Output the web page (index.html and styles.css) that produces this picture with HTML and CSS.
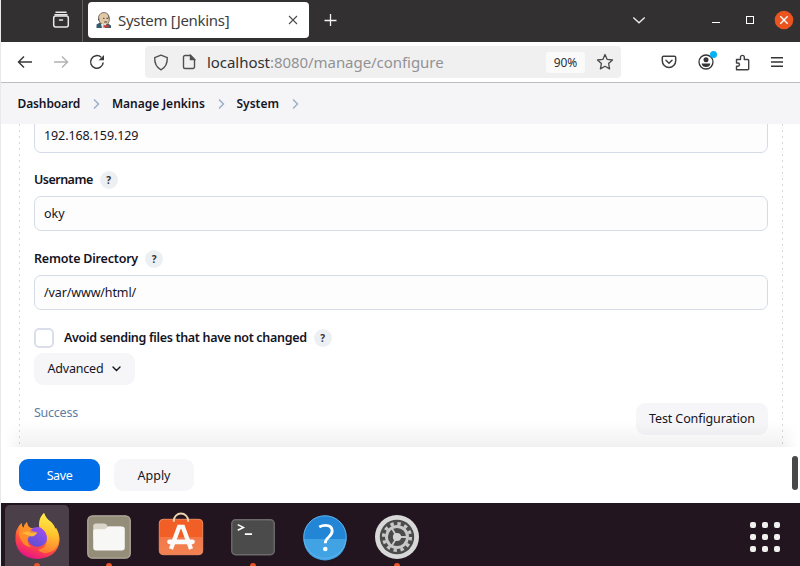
FILE: index.html
```html
<!DOCTYPE html>
<html lang="en">
<head>
<meta charset="utf-8">
<title>System [Jenkins]</title>
<link rel="stylesheet" href="styles.css">
</head>
<body>
<div class="screen">
  <header class="titlebar">
    <svg class="i-view" width="18" height="18" viewBox="0 0 18 18" fill="none" stroke="#e8e8e8" stroke-width="1.5" stroke-linecap="round"><path d="M4 1.3h10M3 3.8h12"/><rect x="1.7" y="5" width="14.6" height="11" rx="2"/><path d="M7.5 9h3"/></svg>
    <span class="divider"></span>
    <div class="tab">
      <svg class="i-jenkins" width="16" height="17" viewBox="0 0 16 17"><path d="M.5 16v-3.500l3.500-2 8 1 3 2V16z" fill="#335b70"/><path d="M2.600 4.500Q4.200.5 8 .6q5 .2 5.300 5.700.3 6.200-4.200 6.900Q4 12.800 3 8z" fill="#e3c8a8" stroke="#4a4640" stroke-width=".7"/><path d="M2.600 3.800Q2 6 3.400 9.500L2 7.700zM11.500 2.200l1.700 3.200.2 3z" fill="#444"/><path d="M5 12h5l-1 4H6z" fill="#e8e8e8"/><path d="m7.500 12.500 2.300 1.200 2.700-1.200v3.500l-2.700-1-2.300 1z" fill="#d33833"/><path d="M7 6.300h1.500m2 0H12M8.200 10h3" stroke="#453a33" stroke-width="1"/></svg>
      <span class="tab-title t">System [Jenkins]</span>
      <svg class="i-close" width="10" height="10" viewBox="0 0 10 10" stroke="#4c4c4c" stroke-width="1.1"><path d="m1 1 8 8m0-8L1 9"/></svg>
    </div>
    <svg class="i-plus" width="14" height="14" viewBox="0 0 14 14" stroke="#f4f4f4" stroke-width="1.3"><path d="M7.500 1v12M1.500 7.500h12"/></svg>
    <div class="window-tools">
      <svg width="14" height="9" viewBox="0 0 14 9" fill="none" stroke="#e9e9e9" stroke-width="1.4"><path d="m1.300 1.500 5.700 5.300 5.700-5.300"/></svg>
      <span class="minimise"></span>
      <span class="maximise"></span>
      <svg width="20" height="20" viewBox="0 0 20 20"><circle cx="10" cy="10" r="9.300" fill="#e95420"/><path d="m6.300 6.300 7.400 7.400m0-7.400-7.400 7.400" stroke="#fff" stroke-width="1.400"/></svg>
    </div>
  </header>

  <nav class="toolbar">
    <svg width="16" height="14" viewBox="0 0 16 14" fill="none" stroke="#3a3a3c" stroke-width="1.500"><path d="M15 7H1.700M7 1.500 1.500 7 7 12.500"/></svg>
    <svg class="i-forward" width="16" height="14" viewBox="0 0 16 14" fill="none" stroke="#b1b1b3" stroke-width="1.400"><path d="M1 7h13.300M9 1.500 14.500 7 9 12.500"/></svg>
    <svg class="i-reload" width="16" height="16" viewBox="0 0 16 16"><path d="M14.200 8.500a6.300 6.300 0 1 1-2-5.200" fill="none" stroke="#3a3a3c" stroke-width="1.500"/><path d="M15 1v5.300H9.700z" fill="#3a3a3c"/></svg>
    <div class="address">
      <svg width="16" height="17" viewBox="0 0 16 17" fill="none" stroke="#505052" stroke-width="1.400"><path d="M8 1.200 14.300 3.600c.2 5.800-1.700 10-6.300 12.200C3.400 13.600 1.500 9.400 1.700 3.600z" stroke-linejoin="round"/></svg>
      <svg class="i-page" width="14" height="16" viewBox="0 0 14 16" fill="none" stroke="#505052" stroke-width="1.400"><path d="M8.500 1.500H3A1.500 1.500 0 0 0 1.500 3v10A1.500 1.500 0 0 0 3 14.500h8a1.500 1.500 0 0 0 1.500-1.500V5.500z"/><path d="M8.500 1.500v4h4z" fill="#505052"/></svg>
      <span class="url t"><b>localhost</b>:8080/manage/configure</span>
      <span class="zoom-level"><span class="t">90%</span></span>
      <svg class="i-star" width="18" height="18" viewBox="0 0 18 18" fill="none" stroke="#4a4a4c" stroke-width="1.300" stroke-linejoin="round"><path d="m9 1.500 2.200 4.900 5.300.6-3.900 3.600 1 5.300L9 13.300l-4.600 2.600 1-5.300L1.500 7l5.300-.6z"/></svg>
    </div>
    <div class="extensions">
      <svg width="16" height="16" viewBox="0 0 16 16" fill="none" stroke="#404043" stroke-width="1.500" stroke-linecap="round"><path d="M2.600 2.200h10.800a1.300 1.300 0 0 1 1.300 1.300v3.200a6.700 6.700 0 0 1-13.400 0V3.500a1.300 1.300 0 0 1 1.300-1.300z"/><path d="m5 6.300 3 3 3-3"/></svg>
      <span class="account"><svg width="16" height="16" viewBox="0 0 16 16"><circle cx="8" cy="8" r="7" fill="none" stroke="#343437" stroke-width="1.300"/><circle cx="8" cy="5.800" r="2.500" fill="#343437"/><path d="M3.600 9.500h8.800q-.6 3.600-4.400 3.600T3.600 9.500" fill="#343437"/></svg><i class="badge"></i></span>
      <svg width="15" height="17" viewBox="0 0 15 17" fill="none" stroke="#404043" stroke-width="1.400" stroke-linejoin="round"><path d="M1.500 5.500h4V3.300a1.900 1.900 0 0 1 3.800 0v2.200h3.400a1 1 0 0 1 1 1v8.200a1 1 0 0 1-1 1H1.500v-3.500h1.400a1.600 1.600 0 0 0 0-3.200H1.500z"/></svg>
      <svg width="12" height="10" viewBox="0 0 12 10" stroke="#343437" stroke-width="1.400"><path d="M0 .8h12M0 5h12M0 9.200h12"/></svg>
    </div>
  </nav>

  <nav class="breadcrumbs">
    <span class="t c1">Dashboard</span><svg width="7" height="12" viewBox="0 0 7 12"><path d="m1 1.500 4.500 4.500L1 10.500"/></svg>
    <span class="t c2">Manage Jenkins</span><svg width="7" height="12" viewBox="0 0 7 12"><path d="m1 1.500 4.500 4.500L1 10.500"/></svg>
    <span class="t c3">System</span><svg width="7" height="12" viewBox="0 0 7 12"><path d="m1 1.500 4.500 4.500L1 10.500"/></svg>
  </nav>

  <main class="content">
    <div class="section">
      <div class="field host"><span class="t v1">192.168.159.129</span></div>
      <div class="label first"><span class="t l1">Username</span><span class="help">?</span></div>
      <div class="field"><span class="t v2">oky</span></div>
      <div class="label"><span class="t l2">Remote Directory</span><span class="help">?</span></div>
      <div class="field"><span class="t v3">/var/www/html/</span></div>
      <div class="check"><span class="checkbox"></span><span class="t l3">Avoid sending files that have not changed</span><span class="help">?</span></div>
      <div class="button advanced"><span class="t b1">Advanced</span><svg width="9" height="6" viewBox="0 0 9 6" fill="none" stroke="#14141f" stroke-width="1.400" stroke-linecap="round"><path d="m1 1 3.500 3.500L8 1"/></svg></div>
      <div class="validate"><span class="t success">Success</span><div class="button test"><span class="t b2">Test Configuration</span></div></div>
    </div>
    <div class="fade"></div>
  </main>

  <footer class="actions">
    <div class="button save"><span class="t b3">Save</span></div>
    <div class="button apply"><span class="t b4">Apply</span></div>
    <span class="scrollbar"></span>
  </footer>

  <div class="dock">
    <div class="app active"><svg class="firefox" width="45" height="46" viewBox="0 0 45 46">
      <defs>
        <linearGradient id="fx" x1=".75" y1="0" x2=".35" y2="1"><stop offset=".1" stop-color="#ffd43a"/><stop offset=".4" stop-color="#ff9a2c"/><stop offset=".7" stop-color="#ff4a3e"/><stop offset="1" stop-color="#e8128a"/></linearGradient>
        <linearGradient id="globe" x1=".8" y1="0" x2=".2" y2="1"><stop offset="0" stop-color="#a14ff0"/><stop offset="1" stop-color="#5b50cf"/></linearGradient>
        <linearGradient id="tail" x1=".5" y1="0" x2=".4" y2="1"><stop stop-color="#fff04a"/><stop offset=".5" stop-color="#ffc52f"/><stop offset="1" stop-color="#ff7a33"/></linearGradient>
      </defs>
      <path d="M6.500 10q0 3 2 5 1-4 3.500-6 0 4 4 6l8 0q0-9 5-15 2 6 7 9 4 4 4 7l1-1q4 6 3.500 13Q43 44 22.500 46 3 45 .5 28-.5 16 6.500 10z" fill="url(#fx)"/>
      <circle cx="22.500" cy="24" r="10" fill="url(#globe)"/>
      <path d="M24 12q0-8 5-12 2 6 7 9 4 4 4 7l1-1q4 8 2 16-2 6-8 8-7 3-12-2 10-2 9-13-1-6-6-9-2-2-2-3z" fill="url(#tail)"/>
      <path d="M6.500 10q0 3 2 5 1-4 3.500-6 0 4 3 7 2 3 7 3-1 3-5 3.500-4 1-4.500 4 0 5 4 8-10-1-13-14Q4 14 6.500 10z" fill="#ff9428" opacity=".85"/>
      <path d="M7 20q6-3 9 0l6-.5q-1 3-5 4-5-1-10-3.500z" fill="#ffb43a"/>
    </svg><i class="dot"></i></div>
    <div class="app"><svg width="44" height="44" viewBox="0 0 46 46"><rect x=".8" y=".8" width="44.400" height="44.400" rx="5" fill="#948d7a" stroke="#b3ac9c" stroke-width="1.300"/><path d="M6.500 12q0-3 3-3h8q3 0 4 3h14v13h-29z" fill="#d9d5c8"/><path d="M6.500 17q0-2 2-2h10l4-3h14q3 0 3 3v19q0 3-3 3h-27q-3 0-3-3z" fill="#f7f7f5"/></svg><i class="dot"></i></div>
    <div class="app"><svg width="44" height="44" viewBox="0 0 46 46"><defs><linearGradient id="bag" x1="0" y1="0" x2="0" y2="1"><stop offset=".49" stop-color="#f15f27"/><stop offset=".5" stop-color="#f37748"/><stop offset="1" stop-color="#f28252"/></linearGradient></defs><rect x=".3" y="4.500" width="45.400" height="37" rx="4" fill="url(#bag)" stroke="#f58b60"/><path d="M15.500 7V6a7.500 7.500 0 0 1 15 0v1" fill="none" stroke="#ead4b0" stroke-width="2"/><path d="m12.500 35.500 8.500-23h4l8.500 23" fill="none" stroke="#fafafa" stroke-width="4.500"/><rect x="8.500" y="25.500" width="29" height="5" rx="2.500" fill="#fafafa"/></svg></div>
    <div class="app"><svg width="44" height="44" viewBox="0 0 46 46"><rect x=".8" y="5" width="44.400" height="36.500" rx="4" fill="#4b4b4b" stroke="#6b6b6b" stroke-width="1.500"/><path d="m7 10 6 3-6 3M14.500 20H22" fill="none" stroke="#fff" stroke-width="1.600"/></svg><i class="dot"></i></div>
    <div class="app"><svg width="44" height="44" viewBox="0 0 46 46"><circle cx="23" cy="23" r="22.500" fill="#2285d6"/><path d="M.5 25a22.500 22.500 0 0 0 45 0z" fill="#41a3e4"/><circle cx="23" cy="23" r="22.200" fill="none" stroke="#62b3ea" stroke-width="1"/><path d="M17 12.500q3-1.700 6.500-1.700 7 0 7 6 0 3.200-3.500 6.200-3.700 3.200-3.700 6.500" fill="none" stroke="#fff" stroke-width="3"/><circle cx="23.300" cy="35.500" r="2.400" fill="#fff"/></svg></div>
    <div class="app"><svg width="44" height="44" viewBox="0 0 46 46"><circle cx="23" cy="23" r="23" fill="#d8d8d8"/><circle cx="23" cy="23" r="18" fill="#4b4b4b"/><circle cx="23" cy="23" r="14" fill="none" stroke="#c8c8c8" stroke-width="3.500" stroke-dasharray="3.500 3.830"/><circle cx="23" cy="23" r="11" fill="none" stroke="#c8c8c8" stroke-width="3"/><path d="m23 23-5-8.500M23 23h10M23 23l-5 8.500" stroke="#c8c8c8" stroke-width="2"/><circle cx="23" cy="23" r="4.300" fill="#d5d5d5"/></svg><i class="dot"></i></div>
    <div class="launcher"><i></i><i></i><i></i><i></i><i></i><i></i><i></i><i></i><i></i></div>
  </div>
</div>
</body>
</html>
```

FILE: styles.css
```css
* { box-sizing: border-box; }
body { margin: 0; background: #e9e9eb; font-family: "Noto Sans", sans-serif; font-size: 12.5px; color: #14141f; }
svg { display: block; flex: none; overflow: visible; }
.screen { width: 800px; height: 566px; padding-left: 1px; display: flex; flex-direction: column; overflow: hidden; }
.t { white-space: nowrap; flex: none; }

.titlebar { height: 42px; flex: none; background: #323031; display: flex; align-items: center; }
.i-view { margin: -2px 0 0 51px; }
.divider { width: 1px; height: 42px; background: #606060; margin-left: 12px; }
.tab { width: 221px; height: 36px; margin: -2px 0 0 5px; padding: 0 11px 0 8px; background: #fff; border-radius: 4px; display: flex; align-items: center; }
.tab-title { font-size: 15px; color: #3e3e40; margin: -1px 0 0 6px; flex: 1; letter-spacing: -.31px; }
.i-plus { margin: -2px 0 0 14px; }
.window-tools { margin: -2px 6px 0 auto; display: flex; align-items: center; }
.minimise { width: 8px; height: 1px; background: #fff; margin: 5px 0 0 66px; }
.maximise { width: 8px; height: 8px; border: 1px solid #fff; margin: 0 20px 0 26px; }

.toolbar { height: 41px; flex: none; background: #fff; border-bottom: 1px solid #bcbcbe; display: flex; align-items: center; padding-left: 16px; }
.i-forward { margin-left: 20px; }
.i-reload { margin-left: 20px; }
.address { width: 476px; height: 32px; margin-left: 40px; background: #f0f0f1; border-radius: 4px; display: flex; align-items: center; padding-left: 8px; }
.i-page { margin-left: 13px; }
.url { margin: -1px 0 0 11px; font-size: 15px; color: #929294; flex: 1; letter-spacing: -.05px; }
.url b { font-weight: 400; color: #303033; }
.zoom-level { width: 39px; height: 21px; border-radius: 3px; background: #fafafa; display: flex; align-items: center; justify-content: center; color: #303033; font-size: 12px; }
.i-star { margin: 0 7px 0 11px; }
.extensions { margin: 0 17px 0 auto; display: flex; align-items: center; gap: 21px; }
.account { position: relative; }
.badge { position: absolute; right: -3px; top: -3px; width: 7px; height: 7px; background: #00b3f4; border-radius: 50%; }

.breadcrumbs { height: 41px; flex: none; background: #f5f5f8; display: flex; align-items: center; padding-left: 16.5px; font-weight: 600; font-size: 12px; }
.breadcrumbs svg { margin: 0 12px 0 12.7px; fill: none; stroke: #9eafc7; stroke-width: 1.5; }
.c1 { letter-spacing: -.12px; }

.content { height: 323px; flex: none; background: #fff; padding: 0 17px 0 18px; position: relative; overflow: hidden; }
.section { height: 330px; padding: 0 15px;
  background-image: repeating-linear-gradient(#d6d8e0 0 2px, transparent 2px 6px), repeating-linear-gradient(#d6d8e0 0 2px, transparent 2px 6px);
  background-size: 1px 100%; background-position: left, right; background-repeat: no-repeat; }
.field { height: 35px; background: #fdfdfd; border: 1px solid #d5dbe7; border-radius: 7px; padding-left: 9px; display: flex; align-items: center; }
.field.host { margin-top: -6px; }
.v1 { letter-spacing: -.1px; }
.v3 { letter-spacing: -.12px; }
.label { display: flex; align-items: center; font-weight: 600; height: 44px; padding-top: 11px; }
.label.first { height: 43px; padding-top: 10px; }
.l1 { letter-spacing: -.52px; }
.l2 { letter-spacing: -.2px; }
.l3 { letter-spacing: -.32px; margin-top: -1px; }
.help { width: 18px; height: 18px; border-radius: 50%; background: #edf0f3; font-size: 10px; font-weight: 700; display: flex; align-items: center; justify-content: center; margin-left: 7px; color: #333; }
.check { height: 20px; margin-top: 18px; display: flex; align-items: center; font-weight: 600; }
.checkbox { width: 20px; height: 20px; border: 2px solid #dadfe9; border-radius: 5px; margin-right: 10px; }
.button { height: 32px; border-radius: 9px; background: #f6f6f9; display: flex; align-items: center; justify-content: center; }
.advanced { width: 101px; margin-top: 5px; gap: 9px; padding-bottom: 1px; }
.b1 { letter-spacing: -.2px; }
.validate { display: flex; justify-content: space-between; margin-top: 18px; }
.success { color: #5c7da3; letter-spacing: -.25px; padding-top: 1px; }
.test { width: 132px; padding-bottom: 1px; }
.b2 { letter-spacing: -.12px; }
.b3 { letter-spacing: -.4px; }
.fade { position: absolute; left: 5px; right: 2px; bottom: 0; height: 26px; background: linear-gradient(rgba(0,0,0,0), rgba(0,0,0,.055)); mask-image: linear-gradient(90deg, transparent, #000 16px, #000 calc(100% - 16px), transparent); }

.actions { height: 56px; flex: none; background: #fff; display: flex; padding: 12px 2px 0 18px; gap: 14px; }
.save { width: 81px; background: #006ee6; color: #fff; }
.apply { width: 80px; }
.scrollbar { width: 6px; height: 34px; border-radius: 3px; background: #484848; margin: -3px 0 0 auto; }

.dock { height: 63px; flex: none; background: #23151f; display: flex; padding: 2px 20px 0 4px; }
.app { width: 64px; height: 62px; margin-right: 8px; position: relative; padding: 10px 0 0 10px; border-radius: 5px 5px 0 0; flex: none; }
.active { background: #4b404a; }
.firefox { margin-top: -2px; }
.dot { position: absolute; left: 29px; top: 58px; width: 6px; height: 6px; border-radius: 50%; background: #e95420; }
.launcher { margin: 17px 0 0 auto; display: grid; grid-template-columns: repeat(3, 6px); gap: 6px; align-content: start; }
.launcher i { width: 6px; height: 6px; border-radius: 2px; background: #f0f0ee; }
```
